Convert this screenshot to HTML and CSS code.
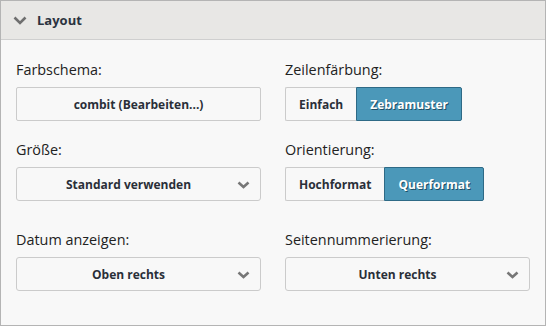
FILE: index.html
```html
<!DOCTYPE html>
<html lang="de">
<head>
<meta charset="utf-8">
<link rel="stylesheet" href="styles.css">
</head>
<body>
<section class="panel">
  <header class="panel-head">
    <svg class="chev" width="14" height="9" viewBox="0 0 14 9"><path d="M1.5 1.5 L7 7 L12.5 1.5" fill="none" stroke="#6f6f6f" stroke-width="2.6"/></svg>
    <span class="title">Layout</span>
  </header>
  <div class="panel-body">
    <div class="field">
      <div class="label">Farbschema:</div>
      <button class="btn full">combit (Bearbeiten...)</button>
    </div>
    <div class="field">
      <div class="label">Zeilenfärbung:</div>
      <div class="group">
        <button class="btn seg">Einfach</button><button class="btn seg active">Zebramuster</button>
      </div>
    </div>
    <div class="field">
      <div class="label">Größe:</div>
      <div class="select">Standard verwenden<svg class="caret" width="13" height="8" viewBox="0 0 13 8"><path d="M1.5 1.5 L6.5 6 L11.5 1.5" fill="none" stroke="#777" stroke-width="2.6"/></svg></div>
    </div>
    <div class="field">
      <div class="label">Orientierung:</div>
      <div class="group">
        <button class="btn seg">Hochformat</button><button class="btn seg active">Querformat</button>
      </div>
    </div>
    <div class="field row3">
      <div class="label">Datum anzeigen:</div>
      <div class="select">Oben rechts<svg class="caret" width="13" height="8" viewBox="0 0 13 8"><path d="M1.5 1.5 L6.5 6 L11.5 1.5" fill="none" stroke="#777" stroke-width="2.6"/></svg></div>
    </div>
    <div class="field row3">
      <div class="label">Seitennummerierung:</div>
      <div class="select">Unten rechts<svg class="caret" width="13" height="8" viewBox="0 0 13 8"><path d="M1.5 1.5 L6.5 6 L11.5 1.5" fill="none" stroke="#777" stroke-width="2.6"/></svg></div>
    </div>
  </div>
</section>
</body>
</html>
```
FILE: styles.css
```css
* { box-sizing: border-box; }
html, body { margin: 0; padding: 0; }
body {
  font-family: "Open Sans", "Noto Sans", sans-serif;
  color: #222;
  background: #fff;
}
.panel {
  width: 546px;
  height: 326px;
  border: 1px solid #b4b4b4;
  background: #f8f8f8;
  display: flex;
  flex-direction: column;
}
.panel-head {
  height: 39px;
  background: #e8e7e5;
  border-bottom: 1px solid #cfcfcf;
  display: flex;
  align-items: center;
  padding-left: 12px;
  gap: 10px;
}
.chev { margin-top: 1px; }
.title {
  font-weight: 700;
  font-size: 13px;
  color: #2b3340;
}
.panel-body {
  display: grid;
  grid-template-columns: 245px 245px;
  column-gap: 24px;
  padding: 20px 15px 0 15px;
}
.field { margin-bottom: 19px; }
.field.row3 { margin-top: 10px; }
.label {
  font-size: 14.4px;
  color: #222;
  height: 27px;
  line-height: 20px;
}
.btn {
  font-family: inherit;
  font-weight: 700;
  font-size: 12px;
  color: #2a2f38;
  background: #f8f8f8;
  border: 1px solid #cbcbcb;
  border-radius: 2px;
  height: 34px;
  padding: 0 13px;
  cursor: pointer;
}
.btn.full { width: 245px; }
.group { display: flex; }
.seg { border-radius: 0; }
.seg:first-child { border-radius: 2px 0 0 2px; border-right: none; }
.seg:last-child { border-radius: 0 2px 2px 0; }
.seg.active {
  background: #4b98b9;
  border-color: #2e6a86;
  color: #fff;
  text-shadow: 1px 1px 0 #1f4f66;
}
.select {
  position: relative;
  height: 34px;
  border: 1px solid #cbcbcb;
  border-radius: 3px;
  background: #f8f8f8;
  font-weight: 700;
  font-size: 12px;
  color: #2a2f38;
  display: flex;
  align-items: center;
  justify-content: center;
  padding-right: 20px;
}
.caret {
  position: absolute;
  right: 10px;
  top: 13px;
}
```
